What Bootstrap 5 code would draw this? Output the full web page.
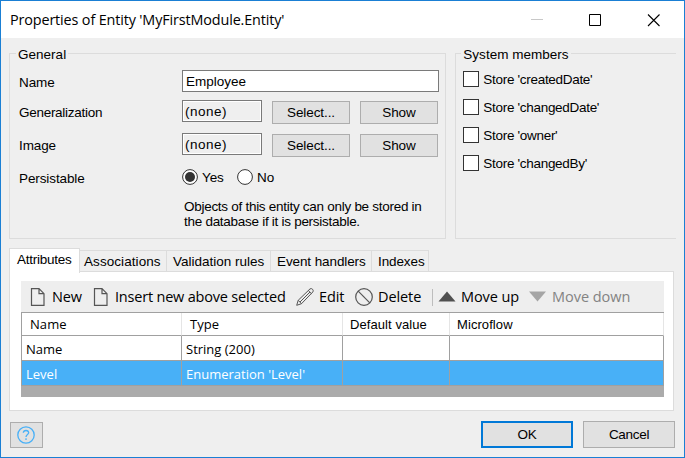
<!DOCTYPE html>
<html lang="en">
<head>
<meta charset="utf-8">
<title>Properties of Entity</title>
<meta name="viewport" content="width=device-width, initial-scale=1">
<link href="https://cdn.jsdelivr.net/npm/bootstrap@5.3.0/dist/css/bootstrap.min.css" rel="stylesheet">
<style>
body{font:13.5px/15px "Liberation Sans",Arial,sans-serif;color:#000;background:#efefef;letter-spacing:-.1px}
.dialog{width:685px;height:458px;border:1px solid #1a7fd4;background:#efefef}
.seg{font-family:"Open Sans","Segoe UI",sans-serif}
.titlebar{height:37px;padding:0 24px 0 9px}
.titlebar .caption{font-size:14.4px;line-height:36px;letter-spacing:-.14px}
.groups{padding:10px 8px 0;gap:9px;height:201px}
.group{border:1px solid #dcdcdc;height:186px;margin-top:5px}
.group-general{width:438px;padding:0 6px 0 9px}
.group-system{width:221px;border-right:0;padding:0 7px}
.group-title{height:15px;margin-top:-7px;padding:0 2px;background:#efefef;width:max-content;line-height:16px;letter-spacing:.02px}
.group-general .group-title{margin-left:-3px}
.group-system .group-title{margin-left:-2px}
.field{height:33px}
.field.first{height:30px;margin-top:8px}
.field .lbl{width:163px;line-height:15px;padding-top:5px}
.tight{letter-spacing:-.28px}
.box{border:1px solid #7a7a7a;border-radius:0;height:22px;padding:0 3px;line-height:21px;letter-spacing:0}
.box.ro{width:80px;box-shadow:inset 0 0 0 1px #fff;margin-right:10px;padding-left:2px;letter-spacing:.5px}
.btn-win{border:1px solid #adadad;border-radius:0;background:#e1e1e1;color:#000;padding:0;font-size:13.5px;line-height:22px;letter-spacing:-.1px}
.btn-win.sm{width:78px;height:23px;margin:1px 10px 0 0}
.rad{width:16px;height:16px;margin:-1px 4px 0 0}
.yes{width:35px}
.note{padding-left:165px;letter-spacing:-.28px;white-space:nowrap}
.checks{margin-top:9px}
.chk{width:16px;height:16px;border:1px solid #333;background:#fff;margin-right:4px}
.chk-row{height:28px;line-height:17px;letter-spacing:-.3px}
.tabs{padding:0 8px;height:24px;margin-top:9px}
.tabs .tab{height:22px;border:1px solid #dcdcdc;border-left:0;border-bottom:0;margin-top:2px;padding:0 0 0 6px;line-height:21px;white-space:nowrap;letter-spacing:0}
.tabs .tab.on{height:25px;margin:0 0 -1px;background:#fff;border-left:1px solid #dcdcdc;padding-left:7px;line-height:22px;position:relative;letter-spacing:-.25px}
.w71{width:71px}.w87{width:87px}.w104{width:104px}.w101{width:101px}.w57{width:57px}
.tabs .w87{padding-left:4px;letter-spacing:.07px}
.tabs .w101,.tabs .w57{letter-spacing:-.1px}
.pane{margin:-1px 10px 0 8px;border:1px solid #dcdcdc;height:140px;background:#fff;padding:9px 9px 0 11px}
.tools{height:31px;background:#eee;font-size:14.5px;line-height:31px;white-space:nowrap;padding-left:8px}
.tools svg,.tools span{flex:none}
.t-new{width:40px}.t-ins{width:181px;letter-spacing:-.2px}.t-edit{width:36px}.t-del{width:54px}.t-up{width:68px}
.t-down{color:#838383;letter-spacing:-.03px}
.grid{width:643px;height:85px;background:#ababab;border-top:1px solid #a0a0a0}
.grid .cells{display:grid;grid-template-columns:161px 161px 107px 214px}
.grid .cells>div{border-right:1px solid #a0a0a0;border-bottom:1px solid #a0a0a0;height:25px;line-height:26px;padding-left:4px;background:#fff;font-size:13px;letter-spacing:0;white-space:nowrap}
.grid .cells>div:first-child{border-left:1px solid #a0a0a0}
.grid .hdr>div{height:23px;line-height:23px;padding-left:7px;border-right-color:#e5e5e5;letter-spacing:.08px}
.grid .hdr>div:nth-child(-n+2){padding-left:8px}
.grid .sel>div{background:#48b0f7;color:#fff}
.foot{padding:10px 9px 0;height:46px}
.foot .btn-win{width:92px;height:27px;line-height:25px;letter-spacing:-.3px}
.foot .btn-win.ok{border:2px solid #0078d7;line-height:23px;margin-right:10px}
.foot .btn-win.help{width:33px;height:26px;margin-top:1px;padding-right:2px}
</style>
</head>
<body class="overflow-hidden">
<div class="dialog">
  <header class="titlebar bg-white d-flex align-items-center">
    <span class="caption seg me-auto">Properties of Entity 'MyFirstModule.Entity'</span>
    <svg width="130" height="14" viewBox="0 0 130 14" fill="none"><path d="M1 6.500h12" stroke="#c8c8c8"/><path d="M59.500 1.500h11v11h-11z" stroke="#000"/><path d="M118 1.500l11.500 11.500M129.500 1.500l-11.500 11.500" stroke="#000" stroke-width="1.100"/></svg>
  </header>
  <div class="groups d-flex">
    <section class="group group-general">
      <div class="group-title">General</div>
      <div class="field first d-flex"><div class="lbl">Name</div><div class="box bg-white flex-fill">Employee</div></div>
      <div class="field d-flex"><div class="lbl tight">Generalization</div><div class="box ro">(none)</div><button class="btn btn-win sm">Select...</button><button class="btn btn-win sm me-0">Show</button></div>
      <div class="field d-flex"><div class="lbl">Image</div><div class="box ro">(none)</div><button class="btn btn-win sm">Select...</button><button class="btn btn-win sm me-0">Show</button></div>
      <div class="field d-flex"><div class="lbl">Persistable</div>
        <div class="d-flex pt-1"><svg class="rad" viewBox="0 0 16 16"><circle cx="8" cy="8" r="7.400" fill="#fff" stroke="#333"/><circle cx="8" cy="8" r="5" fill="#333"/></svg><span class="yes">Yes</span><svg class="rad" viewBox="0 0 16 16"><circle cx="8" cy="8" r="7.400" fill="#fff" stroke="#333"/></svg><span>No</span></div></div>
      <div class="note">Objects of this entity can only be stored in<br>the database if it is persistable.</div>
    </section>
    <section class="group group-system">
      <div class="group-title">System members</div>
      <div class="checks">
        <div class="chk-row d-flex"><div class="chk"></div>Store 'createdDate'</div>
        <div class="chk-row d-flex"><div class="chk"></div>Store 'changedDate'</div>
        <div class="chk-row d-flex"><div class="chk"></div>Store 'owner'</div>
        <div class="chk-row d-flex"><div class="chk"></div>Store 'changedBy'</div>
      </div>
    </section>
  </div>
  <nav class="tabs d-flex">
    <div class="tab on w71">Attributes</div>
    <div class="tab w87">Associations</div>
    <div class="tab w104">Validation rules</div>
    <div class="tab w101">Event handlers</div>
    <div class="tab w57">Indexes</div>
  </nav>
  <main class="pane">
    <div class="tools seg d-flex align-items-center">
      <svg width="23" height="18" viewBox="0 0 23 18" fill="none" stroke="#555" stroke-width="1.200"><path d="M2.500.7H10l5 5v11.600H2.500zM10 .7v5h5"/></svg><span class="t-new">New</span>
      <svg width="23" height="18" viewBox="0 0 23 18" fill="none" stroke="#555" stroke-width="1.200"><path d="M2.500.7H10l5 5v11.600H2.500zM10 .7v5h5"/></svg><span class="t-ins">Insert new above selected</span>
      <svg width="23" height="18" viewBox="0 0 23 18" fill="none" stroke="#555"><path d="M.7 17.300l1.500-5L14 .9q1.500-.8 2.600.4t.3 2.600L5.500 15.700zM2.200 12.300l3.300 3.400M12.300 2.500l3.200 3.200M4 14L14 4"/></svg><span class="t-edit">Edit</span>
      <svg width="23" height="18" viewBox="0 0 23 18" fill="none" stroke="#555" stroke-width="1.200"><circle cx="9" cy="9" r="8.300"/><path d="M3.200 3.200l11.600 11.600"/></svg><span class="t-del">Delete</span>
      <svg width="29" height="18" viewBox="0 0 29 18"><path d="M.5 1v17" stroke="#bdbdbd"/><path d="M6.500 13.500L15 3.500l8.500 10z" fill="#505050"/></svg><span class="t-up">Move up</span>
      <svg width="23" height="18" viewBox="0 0 23 18"><path d="M0 3.500h17L8.500 13.500z" fill="#a5a5a5"/></svg><span class="t-down">Move down</span>
    </div>
    <div class="grid">
      <div class="cells hdr"><div><span class="seg">Name</span></div><div><span class="seg">Type</span></div><div>Default value</div><div>Microflow</div></div>
      <div class="cells seg"><div>Name</div><div>String (200)</div><div></div><div></div></div>
      <div class="cells seg sel"><div>Level</div><div>Enumeration 'Level'</div><div></div><div></div></div>
    </div>
  </main>
  <footer class="foot d-flex">
    <button class="btn btn-win help me-auto d-flex align-items-center justify-content-center" aria-label="Help"><svg width="18" height="18" viewBox="0 0 18 18" fill="none" stroke="#48b0f7" stroke-width="1.300"><circle cx="9" cy="9" r="8.200"/><path d="M6.300 6.800Q6.500 4.500 9 4.500T11.700 6.800C11.700 8.500 9 8.700 9 11M9 12.300v1.700"/></svg></button>
    <button class="btn btn-win ok">OK</button><button class="btn btn-win">Cancel</button>
  </footer>
</div>
<script src="https://cdn.jsdelivr.net/npm/bootstrap@5.3.0/dist/js/bootstrap.bundle.min.js"></script>
</body>
</html>
